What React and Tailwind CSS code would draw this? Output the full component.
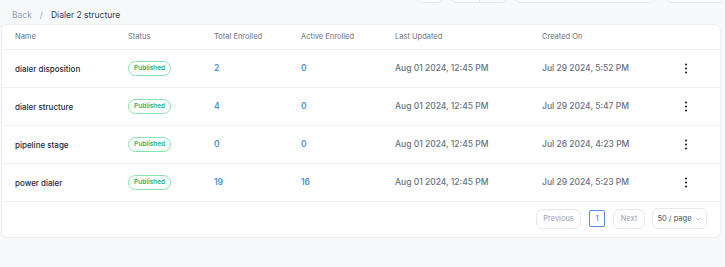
import { ChevronDown } from 'lucide-react';

const ROWS = [
    { name: 'dialer disposition', total: 2, active: 0, updated: 'Aug 01 2024, 12:45 PM', created: 'Jul 29 2024, 5:52 PM' },
    { name: 'dialer structure', total: 4, active: 0, updated: 'Aug 01 2024, 12:45 PM', created: 'Jul 29 2024, 5:47 PM' },
    { name: 'pipeline stage', total: 0, active: 0, updated: 'Aug 01 2024, 12:45 PM', created: 'Jul 26 2024, 4:23 PM' },
    { name: 'power dialer', total: 19, active: 16, updated: 'Aug 01 2024, 12:45 PM', created: 'Jul 29 2024, 5:23 PM' },
];

const COLS = 'grid grid-cols-[113px_86px_87px_94px_147px_142px_1fr] pl-[13px]';

function Kebab() {
    return (
        <svg width="4" height="11" viewBox="0 0 4 11" className="text-gray-800">
            <circle cx="2" cy="1.5" r="1.1" fill="currentColor" />
            <circle cx="2" cy="5.5" r="1.1" fill="currentColor" />
            <circle cx="2" cy="9.5" r="1.1" fill="currentColor" />
        </svg>
    );
}

export default function App() {
    return (
        <div className="w-[725px] h-[267px] bg-[#f8f9fb] overflow-hidden font-['Inter',sans-serif]">
            {/* toolbar buttons cut off at top */}
            <div className="flex h-[3px] items-end gap-2 pl-[416px]">
                <div className="w-[28px] h-[12px] bg-white border border-gray-200 rounded-md" />
                <div className="w-[57px] h-[12px] flex bg-white border border-gray-200 rounded-md overflow-hidden">
                    <div className="w-[28px] border-r border-gray-200" />
                    <div className="flex-1 bg-gray-50" />
                </div>
                <div className="w-[144px] h-[12px] bg-white border border-gray-200 rounded-md" />
                <div className="w-[60px] h-[12px] ml-[2px] bg-white border border-gray-200 rounded-md" />
            </div>

            {/* breadcrumb */}
            <div className="flex items-center h-[17px] pl-[12px] text-[8.5px] mt-[4px]">
                <span className="text-gray-400">Back</span>
                <span className="text-gray-400 mx-[8px]">/</span>
                <span className="text-gray-700">Dialer 2 structure</span>
            </div>

            {/* card */}
            <div className="ml-[1px] w-[720px] h-[214px] bg-white border border-[#eceef2] rounded-md flex flex-col">
                <div className={`${COLS} h-[25px] shrink-0 items-center text-[7.5px] text-gray-500 border-b border-[#eef0f3]`}>
                    <span>Name</span>
                    <span>Status</span>
                    <span>Total Enrolled</span>
                    <span>Active Enrolled</span>
                    <span>Last Updated</span>
                    <span>Created On</span>
                    <span />
                </div>
                {ROWS.map(r => (
                    <div key={r.name} className={`${COLS} h-[38px] shrink-0 items-center border-b border-[#eef0f3] text-[8.5px]`}>
                        <span className="text-gray-800 text-[8px] font-medium">{r.name}</span>
                        <span>
                            <span className="inline-flex items-center h-[15px] px-[5px] rounded-full border border-[#86e3ad] text-[#2fb36a] text-[6.5px] font-semibold">
                                Published
                            </span>
                        </span>
                        <span className="text-[#4c93d6] font-semibold">{r.total}</span>
                        <span className="text-[#4c93d6] font-semibold">{r.active}</span>
                        <span className="text-gray-500 font-medium">{r.updated}</span>
                        <span className="text-gray-500 font-medium">{r.created}</span>
                        <span className="flex"><Kebab /></span>
                    </div>
                ))}
                <div className="flex items-center justify-end pr-[13px] pt-[6px] text-[7.5px]">
                    <button className="h-[20px] w-[45px] rounded-md border border-gray-200 text-gray-400">Previous</button>
                    <span className="ml-[8px] h-[17px] w-[16px] flex items-center justify-center border border-[#5b8def] rounded-[2px] text-[#3b6fd8]">1</span>
                    <button className="ml-[8px] h-[20px] w-[32px] rounded-md border border-gray-200 text-gray-400">Next</button>
                    <button className="ml-[7px] h-[21px] w-[55px] rounded-md border border-gray-200 text-gray-600 flex items-center justify-center gap-[2px]">
                        50 / page <ChevronDown size={8} className="text-gray-400" />
                    </button>
                </div>
            </div>
        </div>
    );
}
